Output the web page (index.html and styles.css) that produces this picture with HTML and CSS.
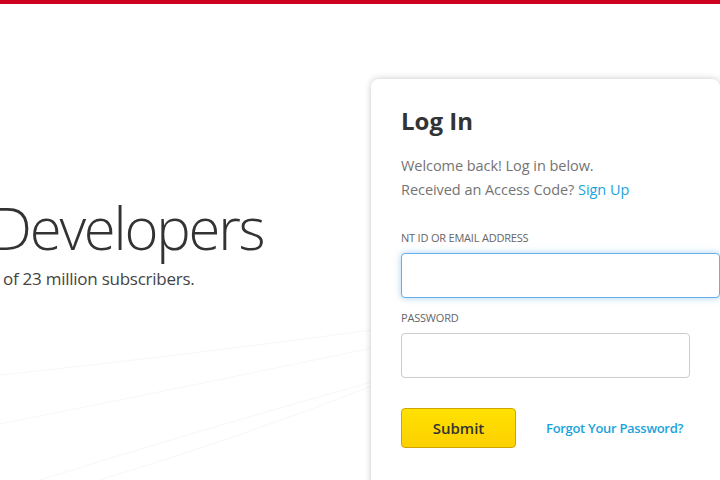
FILE: index.html
```html
<!DOCTYPE html>
<html lang="en">
<head>
<meta charset="utf-8">
<title>Log In</title>
<link rel="stylesheet" href="styles.css">
</head>
<body>
<div class="topbar"></div>
<main class="page">
  <section class="hero">
    <h1 class="hero-title">Developers</h1>
    <p class="hero-sub">of 23 million subscribers.</p>
  </section>
  <section class="card">
    <h2 class="card-title">Log In</h2>
    <p class="intro">Welcome back! Log in below.<br>Received an Access Code? <a class="link" href="#">Sign Up</a></p>
    <form class="form">
      <label class="label" for="email">NT ID OR EMAIL ADDRESS</label>
      <input class="input input-focus" id="email" type="text">
      <label class="label" for="pw">PASSWORD</label>
      <input class="input" id="pw" type="password">
      <div class="actions">
        <button class="submit" type="button">Submit</button>
        <a class="forgot" href="#">Forgot Your Password?</a>
      </div>
    </form>
  </section>
</main>
</body>
</html>
```
FILE: styles.css
```css
html, body {
  margin: 0;
  padding: 0;
  overflow: hidden;
  background: #fff;
}
body {
  width: 720px;
  height: 480px;
  font-family: "Open Sans", "Noto Sans", sans-serif;
  color: #333;
}
.topbar {
  height: 4px;
  background: #cd001f;
}
.page {
  display: flex;
  height: 476px;
  padding-top: 75px;
  box-sizing: border-box;
  background-image: url("data:image/svg+xml;utf8,<svg xmlns='http://www.w3.org/2000/svg' width='372' height='476'><g fill='none' stroke='%23f7f7f7' stroke-width='1'><path d='M0 371 Q180 352 372 326'/><path d='M0 420 Q200 380 372 344'/><path d='M40 476 Q220 420 372 378'/><path d='M100 476 Q250 430 372 382'/></g></svg>");
  background-repeat: no-repeat;
}
.hero {
  width: 371px;
  flex: none;
  padding-top: 114px;
}
.hero-title {
  margin: 0 0 0 -9px;
  font-size: 58px;
  font-weight: 300;
  line-height: 70px;
  color: #333;
  letter-spacing: -2.2px;
}
.hero-sub {
  margin: 4px 0 0 3px;
  font-size: 17px;
  font-weight: 400;
  line-height: 24px;
  color: #444;
  letter-spacing: -0.25px;
}
.card {
  width: 349px;
  flex: none;
  box-sizing: border-box;
  height: 420px;
  background: #fff;
  border-radius: 8px 8px 0 0;
  box-shadow: 0 0 7px rgba(0, 0, 0, 0.22);
  padding: 26px 0 0 30px;
}
.card-title {
  margin: 0;
  font-size: 24px;
  font-weight: 700;
  line-height: 32px;
  color: #333;
}
.intro {
  margin: 17px 0 0;
  font-size: 14.5px;
  line-height: 24px;
  color: #747474;
  letter-spacing: -0.05px;
}
.link {
  color: #1ba3dc;
  text-decoration: none;
}
.form {
  display: flex;
  flex-direction: column;
  align-items: flex-start;
  margin-top: 29px;
}
.label {
  font-size: 11px;
  line-height: 14px;
  color: #666;
  letter-spacing: -0.2px;
  margin-bottom: 8px;
}
.input {
  box-sizing: border-box;
  width: 289px;
  height: 45px;
  border: 1px solid #ccc;
  border-radius: 4px;
  background: #fff;
  margin: 0 0 13px;
  font: inherit;
}
.input-focus {
  width: 319px;
  border-color: #66afe9;
  box-shadow: 0 0 7px rgba(102, 175, 233, 0.55);
  outline: none;
}
.actions {
  display: flex;
  align-items: center;
  gap: 30px;
  margin-top: 17px;
}
.submit {
  box-sizing: border-box;
  width: 115px;
  height: 40px;
  border: 1px solid #cfa600;
  border-radius: 4px;
  background: linear-gradient(#ffe100, #fcd000);
  font-family: "Open Sans", sans-serif;
  font-size: 15px;
  font-weight: 600;
  color: #333;
  padding: 0;
}
.forgot {
  font-size: 13px;
  font-weight: 600;
  color: #1ba3dc;
  text-decoration: none;
  letter-spacing: -0.3px;
}
```
